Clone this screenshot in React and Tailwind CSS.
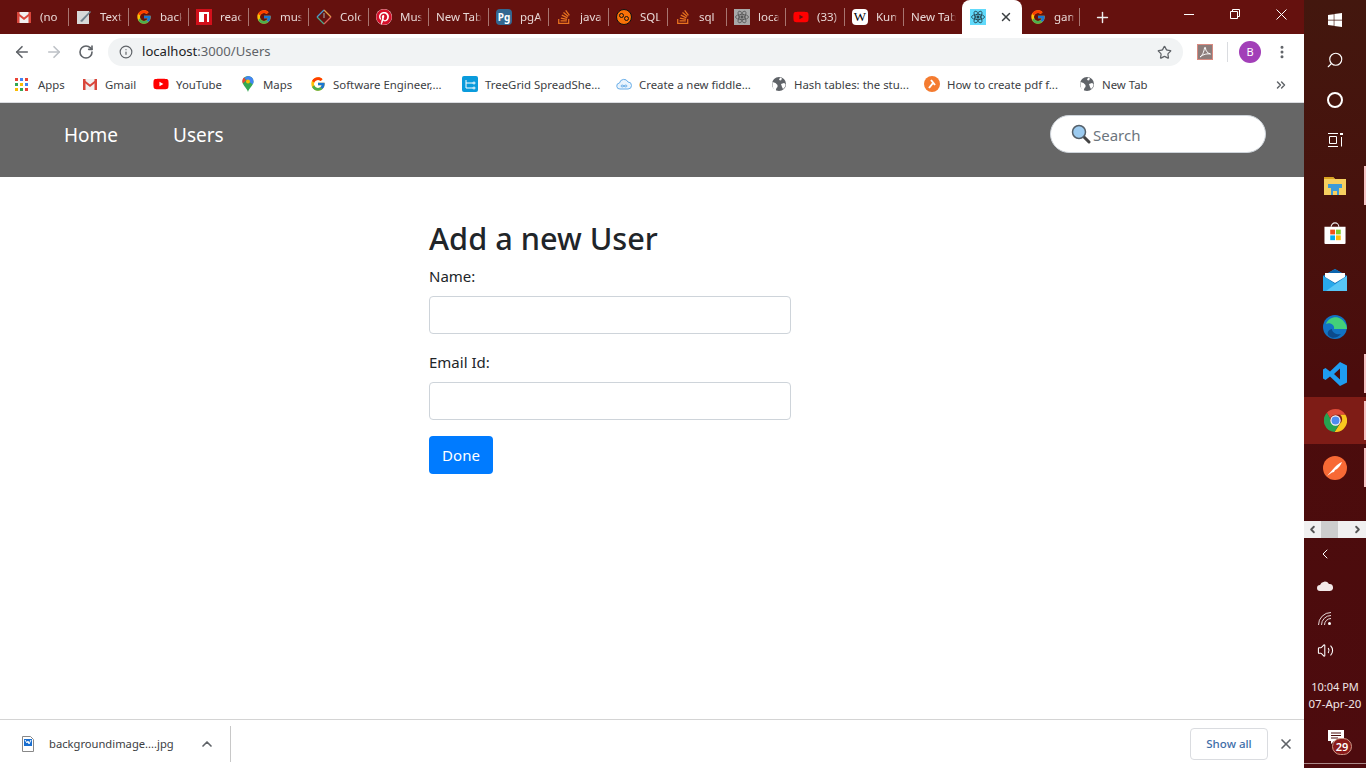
import { ArrowLeft, ArrowRight, RotateCw, Info, Star, ChevronsRight, ChevronUp, ChevronLeft, ChevronRight, X, Plus, Search, EllipsisVertical, Volume2 } from 'lucide-react';
import { FcGoogle } from 'react-icons/fc';
import { FaStackOverflow, FaPinterest, FaWindows, FaYoutube } from 'react-icons/fa';

const font = { fontFamily: '"Noto Sans", sans-serif' };

// ================= FAVICONS =================
const Gmail = () => (
  <svg viewBox="0 0 16 16" className="w-4 h-4">
    <path d="M1 3h14v11H1z" fill="#f1f1f1" />
    <path d="M1 3h2.5v11H1zM12.5 3H15v11h-2.5z" fill="#d9463b" />
    <path d="M1 3l7 5.5L15 3v2.5L8 11 1 5.5z" fill="#d9463b" />
  </svg>
);

const GoogleG = () => <FcGoogle className="w-4 h-4" />;

const Doc = () => (
  <svg viewBox="0 0 16 16" className="w-4 h-4">
    <path d="M1 2h12v13H1z" fill="#d8d8d8" />
    <path d="M4 12L14 2l1 1L6 13z" fill="#71808c" />
  </svg>
);

const Medium = () => (
  <svg viewBox="0 0 16 16" className="w-4 h-4">
    <path d="M0 0h16v16H0z" fill="#d3101b" />
    <path d="M3 3h10v10h-2V5H8v8H3z" fill="#fff" />
  </svg>
);

const Color = () => (
  <svg viewBox="0 0 16 16" className="w-4 h-4" fill="none" strokeWidth="1.2">
    <path d="M8 1l7 7" stroke="#e0a04a" />
    <path d="M15 8l-7 7" stroke="#e0605a" />
    <path d="M8 15L1 8" stroke="#4aa88a" />
    <path d="M1 8l7-7" stroke="#4a9ad0" />
    <path d="M8 4v5" stroke="#999" />
  </svg>
);

const Pinterest = () => (
  <span className="w-4 h-4 rounded-full bg-white flex items-center justify-center">
    <FaPinterest className="w-4 h-4 text-[#d5102a]" />
  </span>
);

const Postgres = () => (
  <span className="w-4 h-4 rounded-sm bg-[#336791] text-white text-[10px] font-bold leading-4 text-center">Pg</span>
);

const Stack = () => <FaStackOverflow className="w-4 h-4 text-[#e8731f]" />;

const Sqlbolt = () => (
  <svg viewBox="0 0 16 16" className="w-4 h-4" fill="none">
    <circle cx="8" cy="8" r="7.5" fill="#f97208" stroke="#111" />
    <circle cx="5.5" cy="6.5" r="2" stroke="#111" />
    <circle cx="10.5" cy="9.5" r="2" stroke="#111" />
  </svg>
);

const ReactIcon = ({ bg = '#61dafb', fg = '#24424f' }) => (
  <svg viewBox="0 0 16 16" className="w-4 h-4" fill="none" stroke={fg} strokeWidth="0.8">
    <path d="M0 0h16v16H0z" fill={bg} stroke="none" />
    <ellipse cx="8" cy="8" rx="6.5" ry="2.6" />
    <ellipse cx="8" cy="8" rx="6.5" ry="2.6" transform="rotate(60 8 8)" />
    <ellipse cx="8" cy="8" rx="6.5" ry="2.6" transform="rotate(120 8 8)" />
    <circle cx="8" cy="8" r="1.2" fill={fg} />
  </svg>
);

const Youtube = () => <FaYoutube className="w-4 h-4 text-[#f00]" />;

const Wiki = () => (
  <span className="w-4 h-4 rounded-sm bg-white text-black text-[13px] leading-4 text-center" style={{ fontFamily: '"Liberation Serif", serif' }}>W</span>
);

// filled grey globe, chrome's default favicon
const GreyGlobe = () => (
  <svg viewBox="0 0 16 16" className="w-4 h-4">
    <circle cx="8" cy="8" r="7" fill="#5f6368" />
    <path d="M9 1.500l2 1-1 2-2-.5zM10 8l3-1 1.500 1c0 2-1 4-2.500 5l-1-2zM1.500 6l3 1 2 2v2l-1 1-1 3C3 14 1 11 1.500 6z" fill="#fff" />
  </svg>
);

const Chrome = () => (
  <svg viewBox="0 0 24 24" className="w-[23px] h-[23px]">
    <path d="M12 0a12 12 0 0 1 10.4 6H12a6 6 0 0 0-5.6 3.8L3 3.9A12 12 0 0 1 12 0z" fill="#dd4b39" />
    <path d="M22.4 6A12 12 0 0 1 11 24l5.6-8.6A6 6 0 0 0 16.8 6z" fill="#f8c81e" />
    <path d="M3 3.900A12 12 0 0 0 11 24l5.200-8.500a6 6 0 0 1-9.800-5.700z" fill="#26a350" />
    <circle cx="12" cy="12" r="4.800" fill="#4d8bf0" stroke="#fff" strokeWidth="1.200" />
  </svg>
);

const tabs = [
  { label: '(no', icon: Gmail, w: 'w-[60px]' },
  { label: 'Text', icon: Doc, w: 'w-[60px]' },
  { label: 'back', icon: GoogleG, w: 'w-[60px]' },
  { label: 'react', icon: Medium, w: 'w-[60px]' },
  { label: 'must', icon: GoogleG, w: 'w-[60px]' },
  { label: 'Color', icon: Color, w: 'w-[60px]' },
  { label: 'Music', icon: Pinterest, w: 'w-[60px]' },
  { label: 'New Tab', w: 'w-[60px]' },
  { label: 'pgAdmin', icon: Postgres, w: 'w-[60px]' },
  { label: 'java', icon: Stack, w: 'w-[60px]' },
  { label: 'SQL', icon: Sqlbolt, w: 'w-[59px]' },
  { label: 'sql', icon: Stack, w: 'w-[59px]' },
  { label: 'local', icon: () => <ReactIcon bg="#a8a8a8" fg="#555" />, w: 'w-[59px]' },
  { label: '(33)', icon: Youtube, w: 'w-[59px]' },
  { label: 'Kumar', icon: Wiki, w: 'w-[59px]' },
  { label: 'New Tab', w: 'w-[59px]' },
];

const bookmarks = [
  { label: 'Gmail', icon: Gmail, w: 'w-[71px]' },
  { label: 'YouTube', icon: Youtube, w: 'w-[87px]' },
  { label: 'Maps', icon: () => (
    <svg viewBox="0 0 16 16" className="w-4 h-4">
      <path d="M8 0a5.500 5.500 0 0 1 5.500 5.500C13.500 9.500 9 12 8 16 7 12 2.500 9.500 2.500 5.500A5.500 5.500 0 0 1 8 0z" fill="#34a853" />
      <path d="M8 0a5.500 5.500 0 0 1 5.500 5.500c0 1-.3 2-.8 2.800L4 2z" fill="#4285f4" />
      <path d="M4 1.500a5.500 5.500 0 0 0-1.200 6L6 4.500z" fill="#ea4335" />
      <circle cx="8" cy="5.500" r="2" fill="#fbbc04" />
    </svg>
  ), w: 'w-[70px]' },
  { label: 'Software Engineer,...', icon: GoogleG, w: 'w-[152px]' },
  { label: 'TreeGrid SpreadShe...', icon: () => (
    <svg viewBox="0 0 16 16" className="w-4 h-4" fill="none" stroke="#fff">
      <rect width="16" height="16" rx="2" fill="#0a9bdc" stroke="none" />
      <path d="M4 4v8h7M4 7h7" />
      <circle cx="12" cy="7" r="1" />
      <circle cx="12" cy="12" r="1" />
    </svg>
  ), w: 'w-[154px]' },
  { label: 'Create a new fiddle...', icon: () => (
    <svg viewBox="0 0 16 16" className="w-4 h-4" fill="#eaf4fd" stroke="#6aaee8">
      <path d="M4 13a3 3 0 0 1-.5-6A4.500 4.500 0 0 1 12 6a3.500 3.500 0 0 1 0 7z" />
      <path d="M8 10c-1-1.500-3-1-3 0s2 1.500 3 0 3-1 3 0-2 1.500-3 0z" fill="none" />
    </svg>
  ), w: 'w-[155px]' },
  { label: 'Hash tables: the stu...', icon: GreyGlobe, w: 'w-[153px]' },
  { label: 'How to create pdf f...', icon: () => (
    <svg viewBox="0 0 16 16" className="w-4 h-4">
      <circle cx="8" cy="8" r="8" fill="#f47b30" />
      <path d="M5 12l4-5M7 4l4 5" stroke="#fff" strokeWidth="2" />
    </svg>
  ), w: 'w-[155px]' },
  { label: 'New Tab', icon: GreyGlobe, w: 'w-[110px]' },
];

const Magnifier = () => (
  <svg viewBox="0 0 20 20" className="w-5 h-5">
    <path d="M12 12l6 6" stroke="#444" strokeWidth="3" strokeLinecap="round" />
    <circle cx="8" cy="8" r="6.500" fill="#9ccbf0" stroke="#55606a" strokeWidth="1.500" />
  </svg>
);

function Tab({ tab }) {
  return (
    <div className={`${tab.w} shrink-0 h-[34px] flex items-center pl-2 relative`}>
      {tab.icon && <span className="w-4 h-4 mr-2 shrink-0 flex"><tab.icon /></span>}
      <span className="text-[11.5px] text-[#e8d8d6] whitespace-nowrap overflow-hidden flex-1 mr-[6px] [mask-image:linear-gradient(to_right,black_85%,transparent)]">{tab.label}</span>
      <span className="absolute right-[-1px] top-[8px] h-[18px] w-px bg-[#a87570]"></span>
    </div>
  );
}

function TabStrip() {
  return (
    <div className="h-[34px] bg-[#65110e] flex items-center pl-2 shrink-0">
      {tabs.map((t, i) => <Tab key={i} tab={t} />)}

      {/* active tab */}
      <div className="w-[60px] shrink-0 h-[34px] bg-white rounded-t-lg flex items-center pl-2 relative z-10">
        <ReactIcon />
        <X className="w-3.5 h-3.5 text-[#3c4043] ml-[13px]" strokeWidth={2.500} />
      </div>
      <div className="w-[58px] shrink-0 h-[34px] flex items-center pl-2 relative">
        <span className="w-4 h-4 mr-2 shrink-0 flex"><GoogleG /></span>
        <span className="text-[11.5px] text-[#e8d8d6] whitespace-nowrap overflow-hidden flex-1 mr-[6px] [mask-image:linear-gradient(to_right,black_85%,transparent)]">game</span>
        <span className="absolute right-0 top-[8px] h-[18px] w-px bg-[#a87570]"></span>
      </div>

      <Plus className="w-[17px] h-[17px] text-[#eee] ml-[14px]" strokeWidth={2} />
      <div className="flex-1"></div>

      {/* window controls */}
      <div className="flex h-[28px] self-start items-center">
        <span className="w-[46px] flex justify-center">
          <svg viewBox="0 0 10 10" className="w-[10px] h-[10px]" stroke="#fff" fill="none"><path d="M0 5.500h10" /></svg>
        </span>
        <span className="w-[46px] flex justify-center">
          <svg viewBox="0 0 10 10" className="w-[10px] h-[10px]" stroke="#fff" fill="none"><path d="M.5 2.500h7v7h-7zM2.500 2.500v-2h7v7h-2" /></svg>
        </span>
        <span className="w-[46px] flex justify-center">
          <svg viewBox="0 0 11 11" className="w-[11px] h-[11px]" stroke="#fff" fill="none"><path d="M.5.5l10 10M10.500.5l-10 10" /></svg>
        </span>
      </div>
    </div>
  );
}

function Toolbar() {
  return (
    <div className="h-[34px] pt-[2px] bg-white flex items-center shrink-0 pl-[13px]">
      <ArrowLeft className="w-[18px] h-[18px] text-[#5f6368]" strokeWidth={2.200} />
      <ArrowRight className="w-[18px] h-[18px] text-[#bdc1c6] ml-[14px]" strokeWidth={2.200} />
      <RotateCw className="w-4 h-4 text-[#5f6368] ml-[15px]" strokeWidth={2.400} />

      <div className="ml-[14px] w-[1075px] h-[28px] rounded-full bg-[#f1f3f4] flex items-center pl-[11px] pr-[11px]">
        <Info className="w-[14px] h-[14px] text-[#5f6368]" strokeWidth={2} />
        <span className="ml-[9px] text-[13.100px] text-[#202124]">localhost<span className="text-[#5f6368]">:3000/Users</span></span>
        <div className="flex-1"></div>
        <Star className="w-[15px] h-[15px] text-[#5f6368]" strokeWidth={2} />
      </div>

      <span className="ml-[14px] w-4 h-4 bg-[#8c7c7a] border border-[#d98a80] flex items-center justify-center">
        <svg viewBox="0 0 14 14" className="w-[14px] h-[14px]" fill="none" stroke="#fff" strokeWidth="1">
          <path d="M2 12c2-1 4-5 4.500-9 .2-1 1-1 1 0 0 3 2 5 5 6-3-.5-7 0-10.500 3z" />
        </svg>
      </span>
      <span className="ml-[14px] w-px h-5 bg-[#dadce0]"></span>
      <span className="ml-[11px] w-[22px] h-[22px] rounded-full bg-[#a23fb8] text-white text-[11px] flex items-center justify-center">B</span>
      <EllipsisVertical className="w-4 h-4 ml-[13px] text-[#5f6368]" strokeWidth={2.500} />
    </div>
  );
}

function BookmarksBar() {
  return (
    <div className="h-[33px] pb-[1px] bg-white flex items-center shrink-0 pl-[15px] border-b border-[#dadce0] box-content">
      <div className="w-[67px] flex items-center shrink-0">
        <span className="w-[13px] h-[13px] grid grid-cols-3 gap-[2px] mr-[10px]">
          {['#ea4335', '#4285f4', '#ea4335', '#34a853', '#fbbc04', '#4285f4', '#fbbc04', '#34a853', '#ea4335'].map((c, i) => (
            <i key={i} className="block" style={{ background: c }}></i>
          ))}
        </span>
        <span className="text-[11.400px] text-[#3c4043]">Apps</span>
      </div>
      {bookmarks.map((b, i) => (
        <div key={i} className={`${b.w} flex items-center shrink-0`}>
          <span className="w-4 h-4 mr-[7px] flex shrink-0"><b.icon /></span>
          <span className="text-[11.400px] text-[#3c4043] whitespace-nowrap">{b.label}</span>
        </div>
      ))}
      <div className="flex-1"></div>
      <ChevronsRight className="w-[14px] h-[14px] mr-4 text-[#5f6368]" strokeWidth={2.500} />
    </div>
  );
}

function NavBar() {
  return (
    <nav className="h-[74px] bg-[#666666] flex items-start shrink-0 pt-[12px] pl-[64px] pr-[38px]">
      <a className="text-[19px] leading-[40px] text-white">Home</a>
      <a className="text-[19px] leading-[40px] text-white ml-[55px]">Users</a>
      <div className="flex-1"></div>
      <div className="w-[216px] h-[38px] bg-white rounded-full border border-[#ced4da] flex items-center pl-5">
        <Magnifier />
        <span className="text-[15px] leading-[24px] pt-[1px] text-[#6c757d] ml-[2px]">Search</span>
      </div>
    </nav>
  );
}

function UserForm() {
  return (
    <main className="flex-1 bg-white pl-[429px] pt-[40px]">
      <div className="w-[362px]">
        <h2 className="text-[30.700px] leading-[43px] font-medium text-[#212529]">Add a new User</h2>

        <label className="block text-[15px] leading-[24px] text-[#212529] mt-[4px]">Name:</label>
        <input className="block w-full h-[38px] mt-[8px] border border-[#ced4da] rounded bg-white" />

        <label className="block text-[15px] leading-[24px] text-[#212529] mt-[16px]">Email Id:</label>
        <input className="block w-full h-[38px] mt-[8px] border border-[#ced4da] rounded bg-white" />

        <button className="mt-[16px] w-[64px] h-[38px] bg-[#007bff] rounded text-white text-[15px]">Done</button>
      </div>
    </main>
  );
}

function DownloadBar() {
  return (
    <div className="h-[49px] bg-white border-t border-[#d4d4d4] flex items-center shrink-0 pl-[22px] pr-[10px]">
      <svg viewBox="0 0 12 16" className="w-3 h-4">
        <path d="M.5.5h8l3 3v12H.5z" fill="#fff" stroke="#888" />
        <path d="M2 3h8v7H2z" fill="#1a6fd0" />
        <path d="M3 4l2 3 1-2 1 3 2-4" stroke="#fff" fill="none" />
      </svg>
      <span className="ml-[15px] text-[11.200px] text-[#3c4043]">backgroundimage....jpg</span>
      <ChevronUp className="w-4 h-4 text-[#5f6368] ml-[25px]" strokeWidth={2.500} />
      <span className="ml-[15px] w-px h-9 bg-[#c8c8c8]"></span>
      <div className="flex-1"></div>
      <button className="w-[78px] h-[32px] rounded border border-[#dadce0] text-[11.500px] text-[#3f6ea8] font-medium">Show all</button>
      <X className="w-4 h-4 text-[#5f6368] ml-[10px]" strokeWidth={2.500} />
    </div>
  );
}

// ================= WINDOWS TASKBAR =================
function TaskApp({ children, open, active }) {
  return (
    <div className={`h-[47px] flex items-center justify-center relative ${active ? 'bg-[#7e1c16]' : ''}`}>
      {children}
      {open && <span className="absolute right-0 top-[4px] bottom-[4px] w-[2px] bg-[#f5c4c4]"></span>}
    </div>
  );
}

function Taskbar() {
  return (
    <aside className="w-[62px] shrink-0 h-full flex flex-col bg-gradient-to-b from-[#43170e] via-[#4b0c0c] to-[#4d0b0e] text-white">
      <div className="h-10 flex items-center justify-center"><FaWindows className="w-4 h-4" /></div>
      <div className="h-10 flex items-center justify-center"><Search className="w-[18px] h-[18px] -scale-x-100" strokeWidth={1.500} /></div>
      <div className="h-10 flex items-center justify-center"><span className="w-4 h-4 rounded-full border-2 border-white"></span></div>
      <div className="h-10 flex items-center justify-center">
        <svg viewBox="0 0 16 16" className="w-4 h-4" fill="none" stroke="#fff">
          <path d="M1 1.500h10M2.500 4.500h7v7h-7zM1 14.500h10M14.500 5v9.500" />
          <path d="M13 1h3v2h-3z" fill="#fff" stroke="none" />
        </svg>
      </div>

      <div className="h-[2px]"></div>
      <TaskApp open>
        <svg viewBox="0 0 22 18" className="w-[22px] h-[18px]">
          <path d="M0 0h9l2 2h11v16H0z" fill="#f6cf5f" />
          <path d="M0 0h9l2 2H0z" fill="#d9a321" />
          <path d="M4 7h14v4h-3v7h-2v-4H9v4H7v-7H4z" fill="#3c9bd8" />
        </svg>
      </TaskApp>
      <TaskApp>
        <svg viewBox="0 0 22 24" className="w-[22px] h-[23px]">
          <path d="M7 6a4 4 0 0 1 8 0" fill="none" stroke="#eee" strokeWidth="1.200" />
          <path d="M0 6h22v17a1 1 0 0 1-1 1H1a1 1 0 0 1-1-1z" fill="#fff" />
          <path d="M6 9h5v5H6z" fill="#f1511b" />
          <path d="M12 9h5v5h-5z" fill="#80cc28" />
          <path d="M6 15h5v5H6z" fill="#00adef" />
          <path d="M12 15h5v5h-5z" fill="#fbbc09" />
        </svg>
      </TaskApp>
      <TaskApp>
        <svg viewBox="0 0 24 22" className="w-6 h-[22px]">
          <path d="M0 7l12-7 12 7v15H0z" fill="#35a8e8" />
          <path d="M0 7l12-7 12 7-12 8z" fill="#0b64ad" />
          <path d="M2 4h20v4l-10 6L2 8z" fill="#fff" />
          <path d="M0 7l12 8 12-8v15H0z" fill="#28a8ea" />
          <path d="M24 7v15H3z" fill="#58c5f5" />
        </svg>
      </TaskApp>
      <TaskApp>
        <svg viewBox="0 0 24 24" className="w-6 h-6">
          <circle cx="12" cy="12" r="12" fill="#1273c4" />
          <path d="M3 9c2-6 10-9 15-5 3 2 6 6 6 10H11c1-4-4-7-8-5z" fill="#43d07a" />
          <path d="M9 14c0 4 5 6 9 5-3 4-9 5-12 2-2-2-2-6 3-7z" fill="#0c4a8c" />
        </svg>
      </TaskApp>
      <TaskApp open>
        <svg viewBox="0 0 24 24" className="w-6 h-6">
          <path d="M17 0l7 3.500v17L17 24 7 14.500 2.500 18 0 16.500V7.500L2.500 6 7 9.500zM17 6.500L11 12l6 5.500z" fill="#1f9cf0" />
        </svg>
      </TaskApp>
      <TaskApp open active><Chrome /></TaskApp>
      <TaskApp open>
        <svg viewBox="0 0 24 24" className="w-6 h-6">
          <circle cx="12" cy="12" r="12" fill="#f76935" />
          <path d="M4 20l8-9c2-2 4-4 7-5-1 3-3 5-5 7l-2 1-1 2-2 .5z" fill="#fff" />
        </svg>
      </TaskApp>

      <div className="flex-1"></div>
      <div className="h-[17px] bg-[#f0f0f0] flex items-center text-[#555] shrink-0">
        <span className="w-[17px] flex justify-center"><ChevronLeft className="w-[11px] h-[11px]" strokeWidth={4} /></span>
        <span className="w-[17px] h-full bg-[#cdcdcd]"></span>
        <div className="flex-1"></div>
        <ChevronRight className="w-[11px] h-[11px] mr-[3px]" strokeWidth={4} />
      </div>

      <div className="h-[32px] flex items-center justify-center pr-[20px]"><ChevronLeft className="w-4 h-4" strokeWidth={1.500} /></div>
      <div className="h-[32px] flex items-center justify-center pr-[20px]">
        <svg viewBox="0 0 16 10" className="w-4 h-[10px]">
          <path d="M3 10a3 3 0 0 1 0-6 5 5 0 0 1 9-1 3.500 3.500 0 0 1 1 7z" fill="#f3e8e8" />
        </svg>
      </div>
      <div className="h-[33px] flex items-center justify-center pr-[20px]">
        <svg viewBox="0 0 14 14" className="w-[14px] h-[14px]" fill="none" stroke="#e8dada">
          <path d="M.5 13A12.500 12.500 0 0 1 13 .5M3.500 13A9.500 9.500 0 0 1 13 3.500M6.500 13A6.500 6.500 0 0 1 13 6.500" />
          <circle cx="11.500" cy="11.500" r="1.500" fill="#fff" stroke="none" />
        </svg>
      </div>
      <div className="h-[30px] flex items-center justify-center pr-[20px]"><Volume2 className="w-[17px] h-[17px]" strokeWidth={1.500} /></div>

      <div className="text-[11px] leading-[17px] text-center text-[#f1e6e6] mt-[13px] mb-[5px] whitespace-nowrap">
        <div>10:04 PM</div>
        <div className="text-[11.500px]">07-Apr-20</div>
      </div>

      <div className="h-[46px] pb-[6px] flex items-center justify-center relative">
        <svg viewBox="0 0 16 14" className="w-4 h-[14px] mr-[-1px]">
          <path d="M0 0h16v11H6l-3 3v-3H0z" fill="#fff" />
          <path d="M3 3h10M3 5.500h10M3 8h7" stroke="#4b0c0c" />
        </svg>
        <span className="absolute left-[28px] top-[21px] w-[20px] h-[17px] rounded-full bg-[#8a1a1a] border border-[#c98] text-[11px] leading-[15px] font-semibold text-center">29</span>
      </div>
      <div className="h-px bg-[#a88] mb-[4px]"></div>
    </aside>
  );
}

export default function App() {
  return (
    <div className="w-[1366px] h-[768px] overflow-hidden flex bg-white" style={font}>
      <div className="w-[1304px] shrink-0 flex flex-col">
        <TabStrip />
        <Toolbar />
        <BookmarksBar />
        <NavBar />
        <UserForm />
        <DownloadBar />
      </div>
      <Taskbar />
    </div>
  );
}
